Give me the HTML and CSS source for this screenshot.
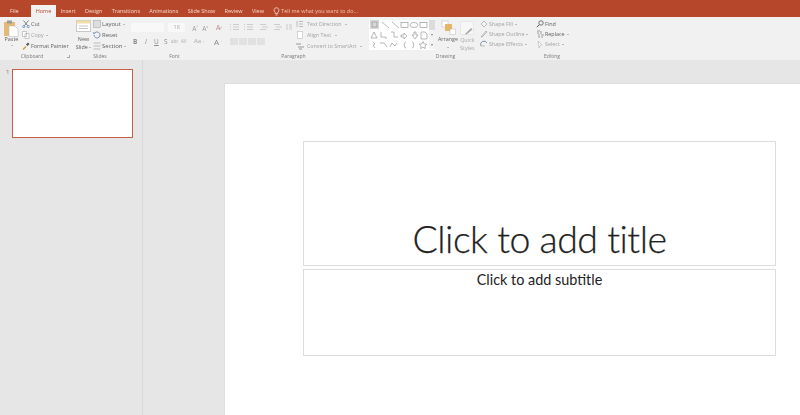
FILE: index.html
```html
<!DOCTYPE html>
<html lang="en">
<head>
<meta charset="utf-8">
<title>PowerPoint</title>
<link rel="stylesheet" href="styles.css">
</head>
<body>
<div class="app">
  <nav class="tabs">
    <span class="tab file">File</span>
    <span class="tab home">Home</span>
    <span class="tab">Insert</span>
    <span class="tab">Design</span>
    <span class="tab">Transitions</span>
    <span class="tab">Animations</span>
    <span class="tab">Slide Show</span>
    <span class="tab">Review</span>
    <span class="tab">View</span>
    <span class="tell">
      <svg width="7" height="9" viewBox="0 0 7 9"><path d="M3.5.7a2.5 2.5 0 0 0-1.3 4.6V6.500h2.600V5.300A2.500 2.500 0 0 0 3.500.700zM2.500 8h2" fill="none" stroke="#f6d9cb" stroke-width=".8"/></svg>
      Tell me what you want to do...
    </span>
  </nav>

  <section class="ribbon">
    <div class="group g-clip">
      <div class="body">
        <div class="big paste">
          <svg width="17" height="17" viewBox="0 0 17 17"><rect x="1" y="2" width="11" height="14" fill="#e4b975"/><rect x="4" y="0.500" width="5" height="3" fill="#9a9a9a"/><path d="M6 6h6l3 3v7.500H6z" fill="#fff" stroke="#bcbcbc" stroke-width=".6"/></svg>
          <span>Paste</span><i class="caret"></i>
        </div>
        <div class="stack">
          <div class="item"><svg width="8" height="8" viewBox="0 0 8 8"><path d="M1.500.5l4 5M6.500.5l-4 5" stroke="#666" fill="none" stroke-width=".8"/><circle cx="1.800" cy="6.500" r="1.100" fill="none" stroke="#5078b4" stroke-width=".7"/><circle cx="6.200" cy="6.500" r="1.100" fill="none" stroke="#5078b4" stroke-width=".7"/></svg>Cut</div>
          <div class="item dim"><svg width="8" height="8" viewBox="0 0 8 8"><path d="M.5.500h4v5h-4zM3 2.500h4v5H3z" fill="#fff" stroke="#aaa" stroke-width=".6"/></svg>Copy <i class="dot"></i></div>
          <div class="item"><svg width="8" height="8" viewBox="0 0 8 8"><path d="M1 7.500l3-3" stroke="#d69a3a" stroke-width="1.400"/><path d="M4 2.500l2-2 1.500 1.500-2 2z" fill="#555"/></svg>Format Painter</div>
        </div>
      </div>
      <div class="label">Clipboard<i class="launch"></i></div>
    </div>

    <div class="group g-slides">
      <div class="body">
        <div class="big newslide">
          <svg width="15" height="12" viewBox="0 0 15 12"><rect x=".5" y=".5" width="14" height="11" fill="#fff" stroke="#c9c9c9"/><rect x=".5" y=".5" width="14" height="3" fill="#efdca6"/><path d="M3 6h9M3 8.500h9" stroke="#c4c4c4"/></svg>
          <span class="two">New<br>Slide <i class="dot"></i></span>
        </div>
        <div class="stack wide-text">
          <div class="item"><svg width="8" height="8" viewBox="0 0 8 8"><rect x=".5" y=".5" width="7" height="7" fill="#ddd" stroke="#aaa" stroke-width=".6"/></svg>Layout <i class="dot"></i></div>
          <div class="item"><svg width="8" height="8" viewBox="0 0 8 8"><path d="M1 4a3 3 0 1 0 1-2.300L.8 3V1" fill="none" stroke="#6d86ab" stroke-width=".9"/></svg>Reset</div>
          <div class="item"><svg width="8" height="8" viewBox="0 0 8 8"><path d="M.5 1h7M.5 4h7M.5 7h7" stroke="#bbb"/></svg>Section <i class="dot"></i></div>
        </div>
      </div>
      <div class="label">Slides</div>
    </div>

    <div class="group g-font">
      <div class="body col">
        <div class="row">
          <span class="field name"></span><span class="field size">18</span>
          <span class="glyph">A<sup>^</sup></span><span class="glyph">A<sup>˅</sup></span><span class="glyph clear">A̷</span>
        </div>
        <div class="row fmt">
          <b class="f-b">B</b><em class="f-i">I</em><u class="f-u">U</u><span class="f-s">S</span><span class="tiny t-abc">abc</span><span class="tiny t-av">AV</span><span class="tiny t-aa">Aa ·</span><span class="aa">A</span><span class="tiny">·</span>
        </div>
      </div>
      <div class="label">Font</div>
    </div>

    <div class="group g-para">
      <div class="body">
        <div class="col para-tools">
          <div class="row lists">
            <svg width="62" height="8" viewBox="0 0 62 8"><g stroke="#c7c7c7" stroke-width=".9"><path d="M0 1.500h1M3 1.500h6M0 4h1M3 4h6M0 6.500h1M3 6.500h6M14 1.500h1M17 1.500h6M14 4h1M17 4h6M14 6.500h1M17 6.500h6M30 1.500h6M32 4h6M30 6.500h6M44 1.500h6M46 4h6M44 6.500h6M57 1v6M59 2h3M59 4h3M59 6h3"/></g></svg>
          </div>
          <div class="row aligns"><i></i><i></i><i></i><i></i></div>
        </div>
        <div class="stack para-stack">
          <div class="item dim"><svg width="8" height="8" viewBox="0 0 8 8"><path d="M1 1v6M3 1.500h4M3 4h4M3 6.500h4" stroke="#bbb"/></svg>Text Direction <i class="dot"></i></div>
          <div class="item dim"><svg width="8" height="8" viewBox="0 0 8 8"><rect x="1.500" y=".5" width="5" height="7" fill="#fff" stroke="#bbb" stroke-width=".6"/></svg>Align Text <i class="dot"></i></div>
          <div class="item dim"><svg width="8" height="8" viewBox="0 0 8 8"><path d="M0 2h5M2 5h6M3 7h3" stroke="#999"/></svg>Convert to SmartArt <i class="dot"></i></div>
        </div>
      </div>
      <div class="label">Paragraph</div>
    </div>

    <div class="group g-draw">
      <div class="body">
        <div class="gallery">
          <svg width="59" height="29" viewBox="0 0 59 29">
            <rect x="0" y="0" width="9" height="9" fill="#d8d8d8"/>
            <g fill="none" stroke="#888" stroke-width=".6">
              <rect x="2" y="2" width="5" height="5"/>
              <path d="M12 2l7 6M22 2l7 6"/>
              <rect x="31" y="2.500" width="7" height="5"/><ellipse cx="44" cy="5" rx="4" ry="2.500"/><rect x="50" y="2.500" width="7" height="5"/>
              <path d="M1 18l3-6 3 6zM11 12v5h5v2M21 12h3v5h4M31 15h3v-2l3 3-3 3v-2h-3zM44 12v3h-2l3 4 3-4h-2v-3zM51 12h4l2 2v5h-6z"/>
              <path d="M3 22l2 2-2 1 2 3M10 23h4l3 4M20 27l2-4 3 3 2-3M36 22c-2 0-1 2-2 3 1 1 0 3 2 3M42 22c2 0 1 2 2 3-1 1 0 3-2 3"/>
              <path d="M53 21.500l1.200 2.400 2.600.4-1.900 1.800.5 2.400-2.400-1.200-2.400 1.200.5-2.400-1.900-1.800 2.600-.4z"/>
            </g>
          </svg>
          <div class="scroll"><i class="thumb"></i><i class="sbtn">▾</i><i class="sbtn">▾</i></div>
        </div>
        <div class="big arrange">
          <svg width="15" height="15" viewBox="0 0 15 15"><rect x="1" y="1" width="6" height="6" fill="#fff" stroke="#bbb" stroke-width=".5"/><rect x="4" y="4" width="7" height="7" fill="#e6b565"/><rect x="9" y="9" width="5.500" height="5.500" fill="#fff" stroke="#bbb" stroke-width=".5"/></svg>
          <span class="two">Arrange<br><i class="dot"></i></span>
        </div>
        <div class="big quick">
          <svg width="15" height="15" viewBox="0 0 15 15"><rect x=".5" y=".5" width="13" height="13" rx="1" fill="#f7f7f7" stroke="#dedede" stroke-width=".6"/><path d="M5 13l6-6 1.500 1.500-6 5z" fill="#a8a8a8"/></svg>
          <span class="two">Quick<br>Styles</span>
        </div>
        <div class="stack shape-stack">
          <div class="item dim"><svg width="8" height="8" viewBox="0 0 8 8"><path d="M1 4l3-3 3 3-3 3z" fill="none" stroke="#bbb"/></svg>Shape Fill <i class="dot"></i></div>
          <div class="item dim"><svg width="8" height="8" viewBox="0 0 8 8"><path d="M1 7l5-6 1 1-5 5z" fill="none" stroke="#aaa" stroke-width=".8"/></svg>Shape Outline <i class="dot"></i></div>
          <div class="item dim"><svg width="8" height="8" viewBox="0 0 8 8"><path d="M1 6a3 3 0 0 1 6-3" fill="none" stroke="#7d8ea8"/><path d="M1 6h4" stroke="#bbb"/></svg>Shape Effects <i class="dot"></i></div>
        </div>
      </div>
      <div class="label">Drawing</div>
    </div>

    <div class="group g-edit">
      <div class="body">
        <div class="stack edit-stack">
          <div class="item"><svg width="8" height="8" viewBox="0 0 8 8"><circle cx="5" cy="3" r="2.200" fill="none" stroke="#555" stroke-width=".8"/><path d="M3.300 4.700L.8 7.200" stroke="#555"/></svg>Find</div>
          <div class="item"><svg width="8" height="8" viewBox="0 0 8 8"><path d="M1 1h3M1 3h2M5 5h3M5 7h2M5 1v3M3 4v4" stroke="#888" stroke-width=".8"/></svg>Replace <i class="dot"></i></div>
          <div class="item dim"><svg width="8" height="8" viewBox="0 0 8 8"><path d="M2 1l4 4-2 .5L3 8z" fill="#fff" stroke="#bbb" stroke-width=".7"/></svg>Select <i class="dot"></i></div>
        </div>
      </div>
      <div class="label">Editing</div>
    </div>
  </section>

  <main class="work">
    <aside class="pane">
      <span class="num">1</span>
      <div class="thumbnail"></div>
    </aside>
    <div class="canvas">
      <div class="slide">
        <div class="ph title">Click to add title</div>
        <div class="ph subtitle">Click to add subtitle</div>
      </div>
    </div>
  </main>
</div>
</body>
</html>
```
FILE: styles.css
```css
* { box-sizing: border-box; }
html, body { margin: 0; height: 415px; overflow: hidden; }
body { font-family: "Open Sans", "Liberation Sans", sans-serif; background: #e6e6e6; }
.app { display: flex; flex-direction: column; width: 800px; height: 415px; }

.tabs { display: flex; align-items: flex-end; height: 17px; padding-left: 10px; background: #b7472a; color: #f7d9cc; font-size: 5.500px; filter: blur(.35px); flex: none; }
.tab { height: 12px; line-height: 12px; margin-right: 9.300px; white-space: nowrap; }
.file { margin-right: 12px; }
.home { background: #f1f1f1; color: #b7472a; padding: 0 5px; margin-right: 4.500px; }
.tell { display: flex; align-items: center; gap: 1px; height: 12px; color: #f3c4b2; white-space: nowrap; }

.ribbon { display: flex; height: 43px; background: #f1f1f1; color: #606060; font-size: 5.400px; filter: blur(.4px); flex: none; }
.group { display: flex; flex-direction: column; flex: none; }
.body { display: flex; height: 35px; padding-top: 3px; }
.col { flex-direction: column; }
.label { position: relative; height: 8px; line-height: 8px; text-align: center; color: #777; font-size: 5px; }
.launch { position: absolute; right: 2px; top: 3px; width: 3px; height: 3px; border-right: 1px solid #aaa; border-bottom: 1px solid #aaa; }
.g-clip { width: 72px; padding-left: 3px; }
.g-clip .label { padding-right: 11px; }
.g-slides { width: 58px; padding-left: 3px; }
.g-slides .label { padding-right: 5px; }
.g-font { width: 96px; padding-left: 1px; }
.g-font .label { padding-right: 8px; }
.g-para { width: 141px; padding-left: 4px; }
.g-para .label { padding-right: 10px; }
.g-draw { width: 163px; padding-left: 2px; }
.g-draw .label { padding-right: 8px; }
.g-edit { width: 270px; padding-left: 4px; }
.g-edit .label { width: 36px; }

.big { display: flex; flex-direction: column; align-items: center; flex: none; line-height: 8px; text-align: center; }
.paste { width: 17px; }
.paste span { margin-top: -2px; }
.caret { width: 0; height: 0; margin-top: 2px; border: 1.500px solid transparent; border-top-color: #888; }
.newslide { width: 17px; }
.newslide span { margin-top: 3px; }
.two { white-space: nowrap; }
.dot { display: inline-block; width: 0; height: 0; vertical-align: middle; border: 1.200px solid transparent; border-top-color: #888; }

.stack { display: flex; flex-direction: column; gap: 3px; margin-left: 2px; }
.item { display: flex; align-items: center; gap: 1px; height: 8px; white-space: nowrap; }
.item .dot { margin-left: 1px; margin-top: 2px; }
.dim { color: #a2a2a2; }
.wide-text { margin-left: 1px; margin-top: -.5px; font-size: 6px; }

.row { display: flex; align-items: center; }
.g-font .body { padding-top: 5px; gap: 3px; }
.field { display: block; height: 9px; background: #f8f8f8; color: #aaa; text-align: center; line-height: 9px; }
.name { width: 35px; margin-right: 4px; }
.size { width: 18px; margin-right: 7px; }
.glyph { width: 10.500px; color: #999; font-size: 6.500px; line-height: 9px; }
.glyph sup { font-size: 3.500px; }
.clear { margin-left: 4px; color: #c08a8a; }
.fmt { height: 10px; color: #8d8d8d; font-size: 6.500px; padding-left: 2px; }
.f-b { width: 12px; }
.f-i { width: 9px; }
.f-u { width: 10px; text-decoration: underline; }
.f-s { width: 7px; }
.tiny { font-size: 4.500px; color: #aaa; }
.t-abc { width: 10px; }
.t-av { width: 13px; }
.t-aa { width: 20px; font-size: 6px; }
.aa { color: #888; font-size: 8px; width: 7px; }

.para-tools { display: flex; width: 66px; padding-top: 3px; gap: 7px; }
.aligns { gap: 1.500px; }
.aligns i { display: block; width: 7.500px; height: 7px; background: #e1e1e1; }
.para-stack { margin-left: 0; font-size: 5.300px; }
.para-stack .item { gap: 3px; }

.gallery { display: flex; width: 66px; height: 30px; background: #fff; padding-left: 1px; }
.scroll { display: flex; flex-direction: column; width: 6px; }
.thumb { display: block; height: 10px; background: #dcdcdc; }
.sbtn { display: block; height: 9.500px; font-size: 4px; font-style: normal; line-height: 9px; text-align: center; background: #f3f3f3; color: #888; }
.arrange { width: 24px; margin-left: 1px; color: #666; }
.arrange span { margin-top: 0; }
.quick { width: 18px; margin-left: 0; color: #aaa; align-items: flex-start; }
.quick svg { margin-top: 1px; }
.quick span { margin-top: 0; }
.shape-stack { margin-left: 2px; gap: 2px; }
.edit-stack { gap: 2px; }

.work { display: flex; flex: 1; min-height: 0; }
.pane { display: flex; flex: none; width: 143px; padding: 9px 0 0 6px; border-right: 1px solid #d8d8d8; }
.num { width: 6px; font-size: 6px; line-height: 7px; color: #b06a55; }
.thumbnail { width: 121px; height: 69px; background: #fff; border: 1.500px solid #c65f4a; }
.canvas { flex: 1; padding: 23px 0 0 81px; }
.slide { display: flex; flex-direction: column; gap: 3px; height: 340px; padding: 57px 24px 0 78px; background: #fff; border-top: 1px solid #dedede; border-left: 1px solid #dedede; }
.ph { border: 1px solid #dcdcdc; text-align: center; color: #222; font-family: Lato, "Liberation Sans", sans-serif; }
.title { display: flex; align-items: flex-end; justify-content: center; height: 125px; font-weight: 300; font-size: 37.500px; letter-spacing: -.5px; line-height: 46px; padding-bottom: 3px; -webkit-text-stroke: .25px #222; }
.subtitle { height: 87px; font-size: 14.400px; line-height: 20px; }
```
